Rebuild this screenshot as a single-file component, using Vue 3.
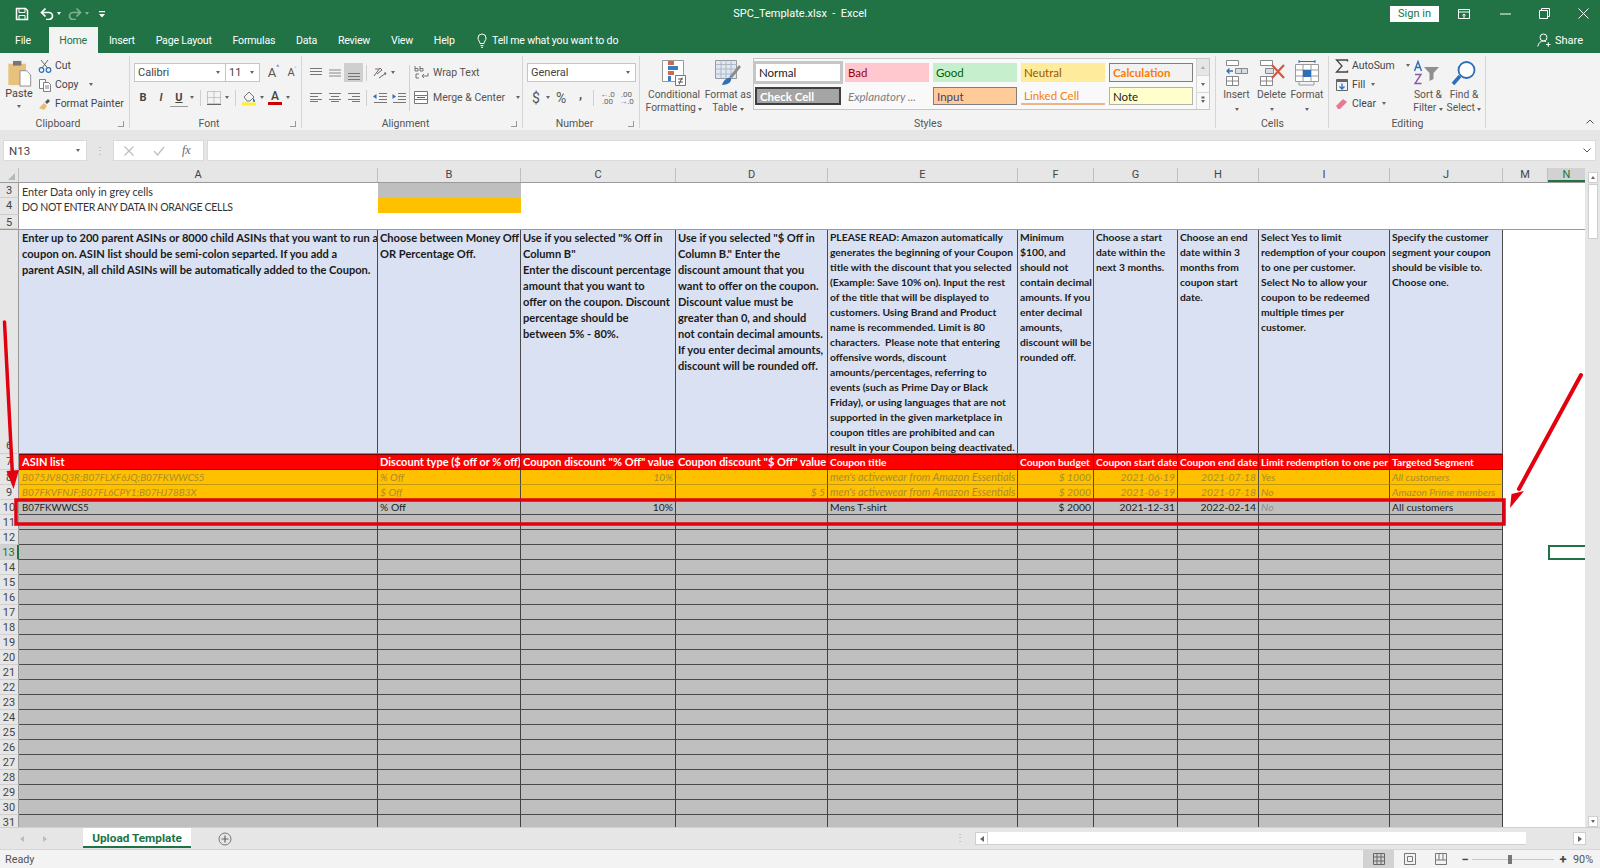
<script setup>
const tabs = ['File', 'Home', 'Insert', 'Page Layout', 'Formulas', 'Data', 'Review', 'View', 'Help']
const colLabels = ['A', 'B', 'C', 'D', 'E', 'F', 'G', 'H', 'I', 'J', 'M', 'N']

const notes = [
  'Enter up to 200 parent ASINs or 8000 child ASINs that you want to run a\ncoupon on. ASIN list should be semi-colon separted. If you add a\nparent ASIN, all child ASINs will be automatically added to the Coupon.',
  'Choose between Money Off\nOR Percentage Off.',
  'Use if you selected "% Off in\nColumn B"\nEnter the discount percentage\namount that you want to\noffer on the coupon. Discount\npercentage should be\nbetween 5% - 80%.',
  'Use if you selected "$ Off in\nColumn B." Enter the\ndiscount amount that you\nwant to offer on the coupon.\nDiscount value must be\ngreater than 0, and should\nnot contain decimal amounts.\nIf you enter decimal amounts,\ndiscount will be rounded off.',
  'PLEASE READ: Amazon automatically\ngenerates the beginning of your Coupon\ntitle with the discount that you selected\n(Example: Save 10% on). Input the rest\nof the title that will be displayed to\ncustomers. Using Brand and Product\nname is recommended. Limit is 80\ncharacters.  Please note that entering\noffensive words, discount\namounts/percentages, referring to\nevents (such as Prime Day or Black\nFriday), or using languages that are not\nsupported in the given marketplace in\ncoupon titles are prohibited and can\nresult in your Coupon being deactivated.',
  'Minimum\n$100, and\nshould not\ncontain decimal\namounts. If you\nenter decimal\namounts,\ndiscount will be\nrounded off.',
  'Choose a start\ndate within the\nnext 3 months.',
  'Choose an end\ndate within 3\nmonths from\ncoupon start\ndate.',
  'Select Yes to limit\nredemption of your coupon\nto one per customer.\nSelect No to allow your\ncoupon to be redeemed\nmultiple times per\ncustomer.',
  'Specify the customer\nsegment your coupon\nshould be visible to.\nChoose one.'
]
const heads = ['ASIN list', 'Discount type ($ off or % off)', 'Coupon discount "% Off" value', 'Coupon discount "$ Off" value', 'Coupon title', 'Coupon budget', 'Coupon start date', 'Coupon end date', 'Limit redemption to one per customer', 'Targeted Segment']
const ex1 = ['B075JV8Q3R;B07FLXF6JQ;B07FKWWCS5', '% Off', '10%', '', "men's activewear from Amazon Essentials", '$ 1000', '2021-06-19', '2021-07-18', 'Yes', 'All customers']
const ex2 = ['B07FKVFNJF;B07FL6CPY1;B07HJ78B3X', '$ Off', '', '$ 5', "men's activewear from Amazon Essentials", '$ 2000', '2021-06-19', '2021-07-18', 'No', 'Amazon Prime members']
const ex3 = ['B07FKWWCS5', '% Off', '10%', '', 'Mens T-shirt', '$ 2000', '2021-12-31', '2022-02-14', 'No', 'All customers']
const rightCols = [2, 3, 5, 6, 7]

const cellsFor = (vals, cls) => vals.map((t, i) => ({ t, c: [cls, rightCols.includes(i) ? 'right' : '', i === 8 && cls === 'data' ? 'muted' : ''] }))
const blank = (cls) => Array.from({ length: 10 }, () => ({ t: '', c: [cls] }))

const rows = []
rows.push({ n: 3, h: 'h15', cells: [{ t: 'Enter Data only in grey cells', c: ['plain'] }, { t: '', c: ['greyfill'] }] })
rows.push({ n: 4, h: 'h17', cells: [{ t: 'DO NOT ENTER ANY DATA IN ORANGE CELLS', c: ['plain', 'caps'] }, { t: '', c: ['amberfill'] }] })
rows.push({ n: 5, h: 'h15 under', cells: [] })
rows.push({ n: 6, h: 'h224', cells: notes.map((t, i) => ({ t, c: ['note', i < 4 ? 'wide' : 'tight'] })) })
rows.push({ n: 7, h: 'h16', cells: heads.map((t, i) => ({ t, c: ['head', i < 4 ? 'hl' : 'hs'] })) })
rows.push({ n: 8, h: 'h15', cells: cellsFor(ex1, 'sample') })
rows.push({ n: 9, h: 'h15', cells: cellsFor(ex2, 'sample') })
rows.push({ n: 10, h: 'h15', cells: cellsFor(ex3, 'data') })
for (let n = 11; n <= 31; n++) rows.push({ n, h: 'h15', cells: blank('data') })
</script>

<template>
  <div class="app">
    <!-- title bar -->
    <header class="titlebar">
      <div class="qat">
        <svg width="14" height="14" viewBox="0 0 14 14"><path d="M1.5 1.5h9l2 2v9h-11z" fill="none" stroke="#fff" stroke-width="1.5"/><path d="M4 2v3.500h6V2M4 12.500V8.500h6v4" fill="none" stroke="#fff"/></svg>
        <svg class="ml11" width="14" height="13" viewBox="0 0 14 13"><path d="M2 5.500h7a3.500 3.500 0 0 1 0 7H6M5.500 1.500 1.500 5.500l4 4" fill="none" stroke="#fff" stroke-width="1.700"/></svg>
        <i class="tri white ml3"></i>
        <svg class="ml7 dim" width="14" height="13" viewBox="0 0 14 13"><path d="M12 5.500H5a3.500 3.500 0 0 0 0 7h3M8.500 1.500l4 4-4 4" fill="none" stroke="#7fb295" stroke-width="1.700"/></svg>
        <i class="tri dimtri ml3"></i>
        <svg class="ml9" width="8" height="8" viewBox="0 0 8 8"><path d="M1 1h6v1.200H1zM1 4h6L4 7.500z" fill="#fff"/></svg>
      </div>
      <div class="doc">SPC_Template.xlsx&nbsp; -&nbsp; Excel</div>
      <div class="winctl">
        <button class="signin">Sign in</button>
        <svg class="wi first" width="12" height="10" viewBox="0 0 12 10"><path d="M.5.500h11v9H.5zM.5 3h11M6 9V5M4.500 6.500 6 5l1.500 1.500" fill="none" stroke="#fff"/></svg>
        <svg class="wi" width="11" height="2" viewBox="0 0 11 2"><path d="M0 1h11" stroke="#fff"/></svg>
        <svg class="wi" width="11" height="11" viewBox="0 0 11 11"><path d="M.5 2.500h8v8h-8zM2.500 2.500v-2h8v8h-2" fill="none" stroke="#fff"/></svg>
        <svg class="wi" width="11" height="11" viewBox="0 0 11 11"><path d="M.5.500l10 10M10.500.500l-10 10" stroke="#fff"/></svg>
      </div>
    </header>

    <!-- tabs -->
    <nav class="tabs">
      <span v-for="t in tabs" :key="t" class="tab" :class="{ active: t === 'Home', file: t === 'File' }">{{ t }}</span>
      <span class="tell">
        <svg width="10" height="15" viewBox="0 0 10 15"><path d="M3 10.500C3 8.500 1 7.500 1 5a4 4 0 0 1 8 0c0 2.500-2 3.500-2 5.500zM3.500 12.500h3M4 14.300h2" fill="none" stroke="#fff"/></svg>
        Tell me what you want to do
      </span>
      <span class="share">
        <svg width="14" height="14" viewBox="0 0 14 14"><circle cx="6.500" cy="4.500" r="3.500" fill="none" stroke="#fff"/><path d="M.8 13.500c.5-3.500 2.800-5.500 5.700-5.500 1 0 1.800.2 2.500.6M9 11.500h4.500M11.300 9.300v4.500" fill="none" stroke="#fff"/></svg>
        Share
      </span>
    </nav>

    <!-- ribbon -->
    <section class="ribbon">
      <div class="group g-clip">
        <div class="gbody clipbody">
          <div class="paste">
            <svg width="25" height="27" viewBox="0 0 26 29"><rect x="1" y="4" width="19" height="23" fill="#e8c27c"/><rect x="6" y="1" width="9" height="5" fill="#767676"/><path d="M13.500 11.500h7l4.500 4.500v12h-11.500z" fill="#fff" stroke="#8a8a8a"/></svg>
            <span class="lbl">Paste</span>
            <i class="tri"></i>
          </div>
          <div class="smallcol">
            <div class="smallrow">
              <svg width="14" height="14" viewBox="0 0 14 14"><path d="M3 1l6.500 8M10 1 4 9" fill="none" stroke="#666"/><circle cx="3.500" cy="11" r="2.300" fill="none" stroke="#2f6fb5" stroke-width="1.200"/><circle cx="10.500" cy="11" r="2.300" fill="none" stroke="#2f6fb5" stroke-width="1.200"/></svg>
              <span>Cut</span>
            </div>
            <div class="smallrow">
              <svg width="14" height="14" viewBox="0 0 14 14"><path d="M1.500 1.500h6v9h-6z" fill="#fff" stroke="#808080"/><path d="M5.500 4.500h5l2 2v7h-7z" fill="#fff" stroke="#808080"/><path d="M7 8h4M7 10h4" stroke="#808080"/></svg>
              <span>Copy</span><i class="tri ml8"></i>
            </div>
            <div class="smallrow">
              <svg width="14" height="14" viewBox="0 0 14 14"><path d="M1 11l5-5 3 3-3 4z" fill="#e7bd72"/><path d="M7 5l3-3 2 2-3 3z" fill="#555"/></svg>
              <span>Format Painter</span>
            </div>
          </div>
        </div>
        <footer class="glabel ll">Clipboard<i class="launch"></i></footer>
      </div>

      <div class="group g-font">
        <div class="gbody pad">
          <div class="row1">
            <span class="combo w92">Calibri<i class="tri"></i></span>
            <span class="combo w35">11<i class="tri"></i></span>
            <span class="gly w20 ml2">A<sup>^</sup></span>
            <span class="gly w18 small">A<sup>˅</sup></span>
          </div>
          <div class="row2">
            <b class="btn bold">B</b>
            <b class="btn ital">I</b>
            <b class="btn under">U</b><i class="tri cw"></i>
            <i class="sep"></i>
            <span class="btn"><svg width="14" height="14" viewBox="0 0 14 14"><path d="M.5.500h13v12H.5zM7 .500v12M.5 6.500h13" fill="none" stroke="#9a9a9a" stroke-dasharray="1 1"/><path d="M0 13.500h14" stroke="#666"/></svg></span><i class="tri cw"></i>
            <i class="sep"></i>
            <span class="btn"><svg width="16" height="16" viewBox="0 0 16 16"><path d="M3 7l5-5 5 5-4 4H6z" fill="#f3f3f3" stroke="#777"/><path d="M12 8c1 1 2 2 2 3a1 1 0 0 1-2 0z" fill="#2f6fb5"/><rect y="12.500" x="1" width="14" height="3" fill="#ffee33"/></svg></span><i class="tri cw"></i>
            <span class="btn"><span class="fontcolor">A</span></span><i class="tri cw"></i>
          </div>
        </div>
        <footer class="glabel ll">Font<i class="launch"></i></footer>
      </div>

      <div class="group g-align">
        <div class="gbody alignbody">
          <div class="ablock">
            <div class="row1">
              <span class="btn a19"><svg width="12" height="10" viewBox="0 0 12 10"><path d="M0 .500h12M0 3.500h12M0 6.500h12" stroke="#777"/></svg></span>
              <span class="btn a19"><svg width="12" height="8" viewBox="0 0 12 8"><path d="M0 1.500h12M0 4.500h12M0 7.500h12" stroke="#888" transform="translate(0 -.5)"/></svg></span>
              <span class="btn a19 pressed"><svg width="12" height="14" viewBox="0 0 12 14"><path d="M0 7.500h12M0 10.500h12M0 13.500h12" stroke="#777"/></svg></span>
              <i class="sep s4"></i>
              <span class="btn w17"><svg width="15" height="14" viewBox="0 0 15 14"><path d="M1 10 7 2l2 2-5 4M6 12l7-5M13 7l-2 0M13 7l-1 2" fill="none" stroke="#666"/><path d="M2 3h4" stroke="#b55"/></svg></span><i class="tri cw"></i>
            </div>
            <div class="row2">
              <span class="btn a19"><svg width="12" height="9" viewBox="0 0 12 9"><path d="M0 .500h12M0 3.500h8M0 6.500h12M0 8.500h8" stroke="#777"/></svg></span>
              <span class="btn a19"><svg width="12" height="9" viewBox="0 0 12 9"><path d="M0 .500h12M2 3.500h8M0 6.500h12M2 8.500h8" stroke="#777"/></svg></span>
              <span class="btn a19"><svg width="12" height="9" viewBox="0 0 12 9"><path d="M0 .500h12M4 3.500h8M0 6.500h12M4 8.500h8" stroke="#777"/></svg></span>
              <i class="sep s4"></i>
              <span class="btn a19"><svg width="14" height="10" viewBox="0 0 14 10"><path d="M6 .500h8M6 3.500h8M6 6.500h8M1 9.500h13" stroke="#777"/><path d="M0 3.500 3.500 1v5z" fill="#2f6fb5"/></svg></span>
              <span class="btn a19"><svg width="14" height="10" viewBox="0 0 14 10"><path d="M6 .500h8M6 3.500h8M6 6.500h8M1 9.500h13" stroke="#777"/><path d="M4 3.500.500 1v5z" fill="#2f6fb5"/></svg></span>
            </div>
          </div>
          <i class="vsep"></i>
          <div class="ablock wrapcol">
            <div class="row1 txtrow">
              <svg width="16" height="15" viewBox="0 0 16 15"><path d="M1 1v5h3V3.500H1M6 1v5h3V3.500H6M5 9H2v4h3M14 8v3H8M10 9l-2 2 2 2" fill="none" stroke="#666" stroke-width=".9"/></svg>
              <span>Wrap Text</span>
            </div>
            <div class="row2 txtrow">
              <svg width="16" height="14" viewBox="0 0 16 14"><path d="M.5.500h13v12H.5zM.5 4.500h13M.5 8.500h13" fill="#fff" stroke="#777"/><path d="M3 6.500h8" stroke="#2f6fb5"/></svg>
              <span>Merge &amp; Center</span><i class="tri ml8"></i>
            </div>
          </div>
        </div>
        <footer class="glabel ll">Alignment<i class="launch"></i></footer>
      </div>

      <div class="group g-num">
        <div class="gbody numbody">
          <div class="row1"><span class="combo w109">General<i class="tri"></i></span></div>
          <div class="row2 numrow">
            <span class="sym dollar">$</span><i class="tri"></i>
            <span class="sym pct">%</span>
            <span class="sym comma">,</span>
            <i class="sep s14"></i>
            <span class="dec"><em>←</em>.0<br>.00</span>
            <span class="dec">.00<br><em>→</em>.0</span>
          </div>
        </div>
        <footer class="glabel ll">Number<i class="launch"></i></footer>
      </div>

      <div class="group g-styles">
        <div class="gbody stylebody">
          <div class="big w56">
            <svg width="26" height="26" viewBox="0 0 26 26"><path d="M1.500.500h21v21h-21z" fill="#fff" stroke="#999"/><rect x="7" y="1" width="6" height="4" fill="#c96a4e"/><rect x="7" y="6" width="10" height="4" fill="#3f7bbf"/><rect x="7" y="11" width="6" height="4" fill="#c96a4e"/><rect x="7" y="16" width="3" height="5" fill="#3f7bbf"/><path d="M14.500 15.500h10v10h-10z" fill="#fff" stroke="#777"/><path d="M17 19h5M17 22h5M18 24.500l3-7" stroke="#444" stroke-width=".9"/></svg>
            <span class="biglabel">Conditional<br>Formatting <i class="tri"></i></span>
          </div>
          <div class="big w50">
            <svg width="26" height="26" viewBox="0 0 26 26"><path d="M.500.500h21v18H.500z" fill="#dfe7f2" stroke="#999"/><path d="M.500 4.500h21M.500 9h21M.500 14h21M6 .500v18M11 .500v18M16 .500v18" stroke="#aeb8c4"/><path d="M14 17 24 5l2 2-9 11z" fill="#8c8c8c"/><path d="M7 25c2-6 6-8 9-7 1 3-2 7-9 7z" fill="#2f6fb5"/></svg>
            <span class="biglabel">Format as<br>Table <i class="tri"></i></span>
          </div>
          <div class="gallery">
            <div class="swatches">
              <span class="sw normal">Normal</span>
              <span class="sw bad">Bad</span>
              <span class="sw good">Good</span>
              <span class="sw neutral">Neutral</span>
              <span class="sw calc">Calculation</span>
              <span class="sw check">Check Cell</span>
              <span class="sw expl">Explanatory ...</span>
              <span class="sw input">Input</span>
              <span class="sw linked">Linked Cell</span>
              <span class="sw notecell">Note</span>
            </div>
            <div class="gscroll">
              <span class="first"><i class="tri up"></i></span>
              <span><i class="tri"></i></span>
              <span><i class="tri bar"></i></span>
            </div>
          </div>
        </div>
        <footer class="glabel">Styles</footer>
      </div>

      <div class="group g-cells">
        <div class="gbody cellsbody">
          <div class="big w35">
            <svg width="24" height="26" viewBox="0 0 24 26"><path d="M1.500.500h12v5h-12zM1.500 16.500h12v9h-12zM7.500 16.500v9M1.500 21h12" fill="#fff" stroke="#888"/><path d="M10.500 8.500h12v5h-12zM16.500 8.500v5" fill="#d7dde5" stroke="#888"/><path d="M8 11H2M4.500 8.500 2 11l2.500 2.500" fill="none" stroke="#2f6fb5" stroke-width="1.300"/></svg>
            <span class="biglabel">Insert</span><i class="tri"></i>
          </div>
          <div class="big w35">
            <svg width="26" height="26" viewBox="0 0 26 26"><path d="M1.500.500h12v5h-12zM1.500 16.500h12v9h-12zM7.500 16.500v9M1.500 21h12" fill="#fff" stroke="#888"/><path d="M6.500 8.500h8v5h-8z" fill="#d7dde5" stroke="#888"/><path d="M13 5l12 13M25 5 13 18" stroke="#d2573f" stroke-width="2.200"/></svg>
            <span class="biglabel">Delete</span><i class="tri"></i>
          </div>
          <div class="big w36">
            <svg width="24" height="26" viewBox="0 0 24 26"><path d="M.500 4.500h23v17H.500zM.500 10h23M.500 16h23M8 4.500v17M16 4.500v17" fill="#fff" stroke="#9a9a9a"/><rect x="8" y="10" width="8" height="7" fill="#2f6fb5"/><path d="M4 1.500h16M4 0v3M20 0v3" stroke="#2f6fb5"/><path d="M4 22v3h15v-3" fill="none" stroke="#9a9a9a"/></svg>
            <span class="biglabel">Format</span><i class="tri"></i>
          </div>
        </div>
        <footer class="glabel">Cells</footer>
      </div>

      <div class="group g-edit">
        <div class="gbody editbody">
          <div class="smallcol ec">
            <div class="smallrow">
              <svg width="14" height="14" viewBox="0 0 14 14"><path d="M12.500 2.500V1H1.500l5.500 6-5.500 6h11v-1.500" fill="none" stroke="#444" stroke-width="1.300"/></svg>
              <span>AutoSum</span><i class="tri ml8"></i>
            </div>
            <div class="smallrow">
              <svg width="14" height="14" viewBox="0 0 14 14"><path d="M1.500 1.500h11v11h-11z" fill="#eef3fa" stroke="#666"/><path d="M1 2h12v2H1z" fill="#666"/><path d="M7 5.500V11M4.500 8.500 7 11l2.500-2.500" fill="none" stroke="#2f6fb5" stroke-width="1.300"/></svg>
              <span>Fill</span><i class="tri ml3"></i>
            </div>
            <div class="smallrow">
              <svg width="14" height="14" viewBox="0 0 14 14"><path d="M1 9l7-7 4 3-7 7H3z" fill="#e8798f"/></svg>
              <span>Clear</span><i class="tri ml3"></i>
            </div>
          </div>
          <div class="big w36">
            <svg width="28" height="26" viewBox="0 0 28 26"><path d="M.5 11 4 1.500 7.500 11M2 7.500h4" fill="none" stroke="#2f6fb5" stroke-width="1.400"/><path d="M1 14.500h6l-6 9h6.500" fill="none" stroke="#8a5aa8" stroke-width="1.400"/><path d="M10 7h15l-5.500 6v6l-4 2v-8z" fill="#8f8f8f"/></svg>
            <span class="biglabel">Sort &amp;<br>Filter <i class="tri"></i></span>
          </div>
          <div class="big w36">
            <svg width="26" height="26" viewBox="0 0 26 26"><circle cx="15.500" cy="10" r="8" fill="#fff" stroke="#2f6fb5" stroke-width="1.800"/><path d="M9 16 2 24" stroke="#2f6fb5" stroke-width="3.500"/></svg>
            <span class="biglabel">Find &amp;<br>Select <i class="tri"></i></span>
          </div>
        </div>
        <footer class="glabel">Editing</footer>
      </div>

      <div class="collapse">
        <svg width="8" height="5" viewBox="0 0 8 5"><path d="M.5 4.500 4 1l3.500 3.500" fill="none" stroke="#555"/></svg>
      </div>
    </section>

    <!-- formula bar -->
    <section class="formula">
      <div class="namebox">N13<i class="tri"></i></div>
      <div class="dots">⋮</div>
      <div class="fxbox">
        <svg width="10" height="10" viewBox="0 0 10 10"><path d="M.5.500l9 9M9.500.500l-9 9" stroke="#bdbdbd" stroke-width="1.200"/></svg>
        <svg width="12" height="10" viewBox="0 0 12 10"><path d="M1 5l3.500 4L11 1" fill="none" stroke="#bdbdbd" stroke-width="1.200"/></svg>
        <em>fx</em>
      </div>
      <div class="fbox">
        <svg width="8" height="5" viewBox="0 0 8 5"><path d="M.5.500 4 4 7.500.500" fill="none" stroke="#555"/></svg>
      </div>
    </section>

    <!-- sheet -->
    <main class="workspace">
      <div class="sheet">
        <div class="gridrow colhead">
          <span class="corner"><i></i></span>
          <span v-for="c in colLabels" :key="c" class="ch" :class="{ selected: c === 'N' }">{{ c }}</span>
        </div>
        <div v-for="r in rows" :key="r.n" class="gridrow" :class="r.h">
          <span class="rh" :class="{ selected: r.n === 13, bottom: r.n === 6 }">{{ r.n }}</span>
          <span v-for="(c, i) in r.cells" :key="i" class="cell" :class="c.c">{{ c.t }}</span>
          <span v-if="r.n === 13" class="cell nothing"></span>
          <span v-if="r.n === 13" class="cell active"></span>
        </div>
      </div>
      <aside class="vscroll">
        <span class="sbtn"><i class="tri up"></i></span>
        <span class="vthumb"></span>
        <span class="vfill"></span>
        <span class="sbtn last"><i class="tri"></i></span>
      </aside>

      <svg class="marks" width="1600" height="644" viewBox="0 183 1600 644">
        <path d="M4.500 322 12.500 476" stroke="#e3000f" stroke-width="3.500" fill="none" stroke-linecap="round"/>
        <path d="M6.500 471 19 470 13.500 489z" fill="#e3000f"/>
        <rect x="16" y="500" width="1488" height="24" fill="none" stroke="#e3000f" stroke-width="3.500"/>
        <path d="M1581 375 1519 489" stroke="#e3000f" stroke-width="4" fill="none" stroke-linecap="round"/>
        <path d="M1511.500 494 1524 491 1510 508z" fill="#e3000f"/>
      </svg>
    </main>

    <!-- sheet tabs -->
    <section class="tabband">
      <span class="nav"><i class="tri left"></i></span>
      <span class="nav n2"><i class="tri right"></i></span>
      <span class="sheettab">Upload Template</span>
      <span class="plus">
        <svg width="14" height="14" viewBox="0 0 14 14"><circle cx="7" cy="7" r="6" fill="none" stroke="#777"/><path d="M3.500 7h7M7 3.500v7" stroke="#666" stroke-width="1.200"/></svg>
      </span>
      <span class="spacer"></span>
      <span class="hdots">⋮</span>
      <span class="hbtn"><i class="tri left dark"></i></span>
      <span class="hthumb"></span>
      <span class="htrack"></span>
      <span class="hbtn"><i class="tri right dark"></i></span>
    </section>

    <!-- status -->
    <footer class="status">
      <span class="ready">Ready</span>
      <span class="spacer"></span>
      <span class="view on"><svg width="12" height="12" viewBox="0 0 12 12"><path d="M.5.500h11v11H.5zM4 .500v11M8 .500v11M.5 4h11M.5 8h11" fill="none" stroke="#666"/></svg></span>
      <span class="view"><svg width="12" height="12" viewBox="0 0 12 12"><path d="M.5.500h11v11H.5z" fill="none" stroke="#777"/><path d="M3.500 3.500h5v5h-5z" fill="none" stroke="#777"/></svg></span>
      <span class="view"><svg width="12" height="12" viewBox="0 0 12 12"><path d="M.5.500h11v11H.5zM.5 7h11M4 .500V7M8 .500V7" fill="none" stroke="#777"/></svg></span>
      <span class="zm">−</span>
      <span class="slider"><i></i></span>
      <span class="zm">+</span>
      <span class="pctlabel">90%</span>
    </footer>
  </div>
</template>

<style>
html, body { margin: 0; padding: 0; }
</style>

<style scoped>
.app {
  width: 1600px; height: 868px; display: flex; flex-direction: column; overflow: hidden;
  font-family: Roboto, "Noto Sans", sans-serif; font-size: 10.4px; color: #444; background: #e6e6e6;
}
i, em { font-style: normal; }
.tri { display: inline-block; width: 0; height: 0; border-left: 2.5px solid transparent; border-right: 2.5px solid transparent; border-top: 3px solid #666; flex: none; }
.tri.white { border-top-color: #fff; }
.tri.dimtri { border-top-color: #7fb295; }
.tri.up { border-top: 0; border-bottom: 3px solid #aaa; }
.tri.left { border: 0; border-top: 3px solid transparent; border-bottom: 3px solid transparent; border-right: 4px solid #bbb; }
.tri.right { border: 0; border-top: 3px solid transparent; border-bottom: 3px solid transparent; border-left: 4px solid #bbb; }
.tri.dark.left { border-right-color: #666; }
.tri.dark.right { border-left-color: #666; }
.tri.bar { box-shadow: 0 -4px 0 -0.5px #666; }
.ml2 { margin-left: 2px; } .ml3 { margin-left: 3px; } .ml7 { margin-left: 7px; } .ml8 { margin-left: 8px; } .ml9 { margin-left: 9px; } .ml11 { margin-left: 11px; }

.titlebar { height: 27px; flex: none; background: #217346; color: #fff; display: flex; align-items: center; position: relative; }
.qat { display: flex; align-items: center; padding-left: 15px; width: 700px; }
.doc { position: absolute; left: 0; right: 0; text-align: center; font-size: 11px; top: 7px; pointer-events: none; }
.winctl { margin-left: auto; display: flex; align-items: center; padding-right: 11px; }
.signin { width: 49px; height: 16px; margin-right: 19px; padding: 0; border: 0; background: #fff; color: #217346; font: 11px Roboto, sans-serif; }
.wi { margin-left: 28px; }
.wi.first { margin-left: 0; margin-right: 2px; }

.tabs { height: 26px; flex: none; background: #217346; color: #fff; display: flex; align-items: stretch; font-size: 10.6px; letter-spacing: -0.2px; padding-left: 4px; }
.tab { display: flex; align-items: center; padding: 0 10.4px; }
.tab.file { padding: 0 11px; margin-right: 7px; }
.tab.active { background: #f3f3f3; color: #217346; padding: 0 10.5px; margin-right: 1px; }
.tell { display: flex; align-items: center; gap: 5px; margin-left: 12px; }
.share { margin-left: auto; display: flex; align-items: center; gap: 4px; padding-right: 17px; letter-spacing: 0; font-size: 11px; }

.ribbon { height: 77px; flex: none; background: #f3f3f3; display: flex; position: relative; }
.group { position: relative; display: flex; flex-direction: column; flex: none; box-sizing: border-box; }
.group::after { content: ""; position: absolute; right: 0; top: 3px; bottom: 2px; width: 1px; background: #d6d6d6; }
.g-clip { width: 130px; } .g-font { width: 172px; } .g-align { width: 221px; } .g-num { width: 117px; } .g-styles { width: 576px; } .g-cells { width: 113px; } .g-edit { width: 157px; }
.gbody { height: 64px; flex: none; }
.glabel { height: 13px; text-align: center; position: relative; line-height: 13px; color: #555; font-size: 10.5px; box-sizing: border-box; }
.glabel.ll { padding-right: 14px; }
.launch { position: absolute; right: 6px; bottom: 3px; width: 6px; height: 6px; border-left: 1px solid #999; border-bottom: 1px solid #999; box-sizing: border-box; transform: rotate(-90deg); }
.collapse { position: absolute; right: 6px; bottom: 3px; }

.clipbody { display: flex; }
.paste { width: 38px; display: flex; flex-direction: column; align-items: center; padding-top: 7px; flex: none; }
.paste .lbl { line-height: 13px; font-size: 10.8px; }
.paste .tri { margin-top: 5px; }
.smallcol { padding-top: 3px; }
.smallrow { height: 19px; display: flex; align-items: center; gap: 3px; white-space: nowrap; }
.smallrow svg { flex: none; }

.pad { padding: 10px 0 0 4px; box-sizing: border-box; }
.row1, .row2 { display: flex; align-items: center; height: 19px; white-space: nowrap; }
.row2 { margin-top: 6px; }
.combo { height: 19px; box-sizing: border-box; background: #fff; border: 1px solid #c6c6c6; display: flex; align-items: center; justify-content: space-between; padding: 0 5px 0 3px; font-size: 11px; }
.w92 { width: 92px; } .w35 { width: 35px; margin-left: -1px; } .w109 { width: 109px; } .w20 { width: 20px; } .w18 { width: 18px; }
.gly { font-size: 13px; text-align: center; color: #555; position: relative; }
.gly.small { font-size: 11px; }
.gly sup { font-size: 7px; position: absolute; top: -1px; color: #2f6fb5; }
.btn { display: flex; align-items: center; justify-content: center; width: 18px; height: 19px; flex: none; font-family: Roboto, sans-serif; font-size: 11px; color: #444; }
.btn.ital { font-style: italic; font-weight: 600; }
.btn.under { text-decoration: underline; }
.cw { margin: 0 2px; }
.sep { width: 1px; height: 16px; background: #d0d0d0; margin: 0 4px; flex: none; }
.fontcolor { font: 500 12px/12px Roboto, sans-serif; color: #444; border-bottom: 3px solid #c00; display: block; width: 14px; text-align: center; }

.alignbody { display: flex; padding: 10px 0 0 4px; box-sizing: border-box; }
.ablock { width: 103px; flex: none; }
.a19 { width: 19px; }
.w17 { width: 17px; margin-left: 2px; }
.pressed { background: #cfcfcf; }
.sep.s4 { margin: 0 3px; }
.vsep { width: 1px; height: 46px; background: #d0d0d0; flex: none; margin-top: 2px; }
.wrapcol { padding-left: 4px; width: 104px; }
.txtrow { gap: 3px; font-size: 10.5px; color: #555; }
.txtrow svg { flex: none; }

.numbody { padding: 10px 0 0 4px; box-sizing: border-box; }
.numrow { padding-left: 2px; }
.sym { color: #555; }
.dollar { font-size: 14px; width: 14px; text-align: center; margin-right: 3px; }
.pct { font-size: 14px; margin-left: 6px; width: 19px; }
.comma { font-size: 13px; font-weight: 700; margin-left: 4px; width: 12px; margin-top: -6px; }
.sep.s14 { margin: 0 4px 0 2px; }
.dec { font-size: 8px; line-height: 7px; width: 19px; text-align: center; color: #666; }
.dec em { color: #2f6fb5; }

.stylebody { display: flex; padding-left: 6px; box-sizing: border-box; }
.big { display: flex; flex-direction: column; align-items: center; padding-top: 7px; flex: none; box-sizing: border-box; }
.biglabel { text-align: center; line-height: 13px; margin-top: 2px; white-space: nowrap; font-size: 10.3px; color: #555; }
.big > .tri { margin-top: 7px; }
.w56 { width: 56px; } .w50 { width: 52px; } .w36 { width: 36px; }
.gallery { width: 457px; height: 52px; margin-top: 5px; margin-left: -1px; box-sizing: border-box; border: 1px solid #c6c6c6; background: #f9f9f9; display: flex; flex: none; }
.swatches { display: grid; grid-template-columns: 86px 84px 84px 84px 84px; grid-template-rows: 19px 18px; gap: 5px 4px; padding: 4px 0 0 1px; width: 442px; box-sizing: border-box; }
.sw { display: flex; align-items: center; padding-left: 3px; box-sizing: border-box; white-space: nowrap; overflow: hidden; font-family: "Lato", sans-serif; font-size: 11.5px; }
.normal { background: #fff; color: #222; outline: 3px solid #c6c6c6; outline-offset: -1px; padding-left: 4px; }
.bad { background: #ffc7ce; color: #9c0006; }
.good { background: #c6efce; color: #006100; }
.neutral { background: #ffeb9c; color: #9c5700; }
.calc { background: #f2f2f2; color: #fa7d00; border: 1px solid #7f7f7f; font-weight: 700; }
.check { background: #a5a5a5; color: #fff; border: 2px solid #3f3f3f; font-weight: 700; }
.expl { color: #7f7f7f; font-style: italic; }
.input { background: #ffcc99; color: #3f3f76; border: 1px solid #7f7f7f; }
.linked { color: #fa7d00; border-bottom: 2px solid #e9b58a; }
.notecell { background: #ffffcc; color: #222; border: 1px solid #b2b2b2; }
.gscroll { margin-left: auto; width: 12px; display: flex; flex-direction: column; border-left: 1px solid #d6d6d6; }
.gscroll span { flex: 1; display: flex; align-items: center; justify-content: center; border-top: 1px solid #d6d6d6; }
.gscroll .first { border-top: 0; background: #e6e6e6; }

.cellsbody { display: flex; padding-left: 3px; box-sizing: border-box; }
.cellsbody .w35 { width: 35px; margin: 0; }
.editbody { display: flex; padding-left: 6px; box-sizing: border-box; }
.ec { width: 75px; flex: none; padding-top: 3px; }

.formula { height: 38px; flex: none; background: #e6e6e6; display: flex; box-sizing: border-box; padding: 10px 4px 7px 3px; }
.namebox { width: 84px; box-sizing: border-box; background: #fff; border: 1px solid #dadada; display: flex; align-items: center; justify-content: space-between; padding: 0 6px 0 5px; font-size: 11.5px; flex: none; }
.dots { width: 26px; text-align: center; color: #aaa; line-height: 21px; flex: none; }
.fxbox { width: 91px; box-sizing: border-box; background: #fff; border: 1px solid #dadada; display: flex; align-items: center; gap: 19px; padding-left: 10px; flex: none; }
.fxbox em { font: italic 12px "Liberation Serif", serif; color: #666; margin-left: -2px; }
.fbox { flex: 1; margin-left: 3px; background: #fff; border: 1px solid #dadada; box-sizing: border-box; display: flex; align-items: center; justify-content: flex-end; padding-right: 4px; }

.workspace { flex: none; height: 659px; display: flex; position: relative; overflow: hidden; }
.sheet { width: 1585px; flex: none; background: #fff; overflow: hidden; }
.gridrow { display: grid; grid-template-columns: 19px 359px 143px 155px 152px 190px 76px 84px 81px 131px 113px 45px 37px; grid-template-rows: minmax(0, 1fr); font-family: "Lato", sans-serif; font-size: 10.8px; color: #222; }
.colhead { height: 15px; background: #e6e6e6; font-family: Roboto, sans-serif; font-size: 11px; color: #444; box-sizing: border-box; border-bottom: 1px solid #9a9a9a; }
.corner { position: relative; border-right: 1px solid #c0c0c0; }
.corner i { position: absolute; right: 3px; bottom: 2px; width: 0; height: 0; border-left: 7px solid transparent; border-bottom: 7px solid #b8b8b8; }
.ch { text-align: center; line-height: 14px; border-right: 1px solid #c0c0c0; box-sizing: border-box; }
.ch.selected { background: #d2d2d2; color: #217346; border-right: 0; box-shadow: inset 0 -2px 0 #217346; }
.h15 { height: 15px; } .h16 { height: 16px; } .h17 { height: 17px; } .h224 { height: 224px; }
.under { border-bottom: 1px solid #9a9a9a; box-sizing: border-box; }
.rh { background: #e6e6e6; color: #444; text-align: center; font-family: Roboto, sans-serif; font-size: 11px; line-height: 15px; border-right: 1px solid #9a9a9a; border-bottom: 1px solid #cfcfcf; box-sizing: border-box; overflow: hidden; }
.rh.bottom { display: flex; align-items: flex-end; justify-content: center; }
.rh.selected { background: #d2d2d2; color: #217346; border-right: 2px solid #217346; }
.cell { box-sizing: border-box; padding: 0 2px; white-space: pre; overflow: hidden; line-height: 14px; min-width: 0; }
.cell:nth-child(2) { padding-left: 3px; }
.plain { line-height: 17px; color: #333; }
.caps { letter-spacing: -0.3px; font-size: 10.5px; line-height: 18px; }
.greyfill { background: #bfbfbf; }
.amberfill { background: #ffc000; margin-bottom: 2px; }
.note { background: #d9e1f2; font-weight: 700; color: #1a1a1a; border-right: 1px solid #4a4a4a; border-bottom: 1px solid #8a8a8a; }
.wide { font-size: 11.1px; line-height: 16px; }
.tight { font-size: 10.3px; line-height: 15px; }
.head { background: #f00; color: #fff; font-weight: 700; border-right: 1px solid #b00000; border-top: 1px solid #7a0000; border-bottom: 1px solid #c00000; }
.hl { font-size: 11px; }
.hs { font-size: 10.2px; }
.sample { background: #ffc000; color: #a98c2c; font-style: italic; border-right: 1px solid #4a4a4a; border-bottom: 1px solid #c29a10; font-size: 10.3px; }
.sample:nth-child(2) { font-size: 9.9px; }
.sample:nth-child(6) { font-size: 10.8px; }
.data { background: #bfbfbf; color: #222; border-right: 1px solid #404040; border-bottom: 1px solid #4a4a4a; font-size: 10.3px; line-height: 15px; }
.data:nth-child(2) { font-size: 9.7px; }
.right { text-align: right; }
.muted { color: #8c8c8c; font-style: italic; }
.nothing { background: #fff; }
.cell.active { border: 2px solid #217346; border-right: 0; background: #fff; }

.vscroll { width: 15px; flex: none; background: #e6e6e6; display: flex; flex-direction: column; box-sizing: border-box; padding: 0 2px 0 3px; }
.sbtn { height: 11px; flex: none; margin-top: 4px; background: #fff; border: 1px solid #cfcfcf; display: flex; align-items: center; justify-content: center; box-sizing: border-box; }
.sbtn.last { margin-top: 0; }
.sbtn .tri { border-top-color: #666; }
.sbtn .tri.up { border-bottom-color: #666; }
.vthumb { height: 55px; margin-top: 1px; background: #fff; flex: none; border: 1px solid #cfcfcf; box-sizing: border-box; }
.vfill { flex: 1; }
.marks { position: absolute; left: 0; top: 15px; pointer-events: none; }

.tabband { height: 23px; flex: none; background: #e6e6e6; display: flex; align-items: flex-start; box-sizing: border-box; border-top: 1px solid #cfcfcf; border-bottom: 1px solid #d6d6d6; }
.nav { margin: 8px 0 0 20px; width: 4px; display: block; line-height: 0; }
.nav.n2 { margin-left: 19px; }
.sheettab { margin-left: 36px; width: 108px; height: 20px; box-sizing: border-box; background: #fff; color: #217346; font-weight: 700; font-size: 11.8px; text-align: center; line-height: 20px; border-bottom: 2px solid #217346; }
.plus { margin: 4px 0 0 27px; line-height: 0; }
.spacer { flex: 1; }
.hdots { color: #aaa; line-height: 20px; margin-right: 10px; }
.hbtn { width: 13px; height: 13px; margin-top: 4px; background: #fff; border: 1px solid #cfcfcf; box-sizing: border-box; display: flex; align-items: center; justify-content: center; flex: none; }
.hbtn:last-child { margin-right: 14px; }
.hthumb { width: 538px; height: 13px; margin-top: 4px; background: #fff; border-bottom: 1px solid #cfcfcf; box-sizing: border-box; flex: none; }
.htrack { width: 47px; flex: none; }

.status { height: 18px; flex: none; background: #f3f3f3; display: flex; align-items: center; font-size: 10.8px; color: #555; }
.ready { margin-left: 5px; }
.view { width: 31px; height: 18px; display: flex; align-items: center; justify-content: center; flex: none; }
.view.on { background: #d2d2d2; }
.zm { margin-left: 4px; font-size: 13px; font-weight: 700; width: 10px; text-align: center; color: #444; }
.slider { width: 82px; height: 1px; background: #c6c6c6; position: relative; margin: 0 0 0 2px; }
.slider i { position: absolute; left: 36px; top: -4px; width: 4px; height: 9px; background: #777; }
.pctlabel { width: 32px; padding-left: 5px; box-sizing: border-box; font-size: 10.8px; }
</style>
